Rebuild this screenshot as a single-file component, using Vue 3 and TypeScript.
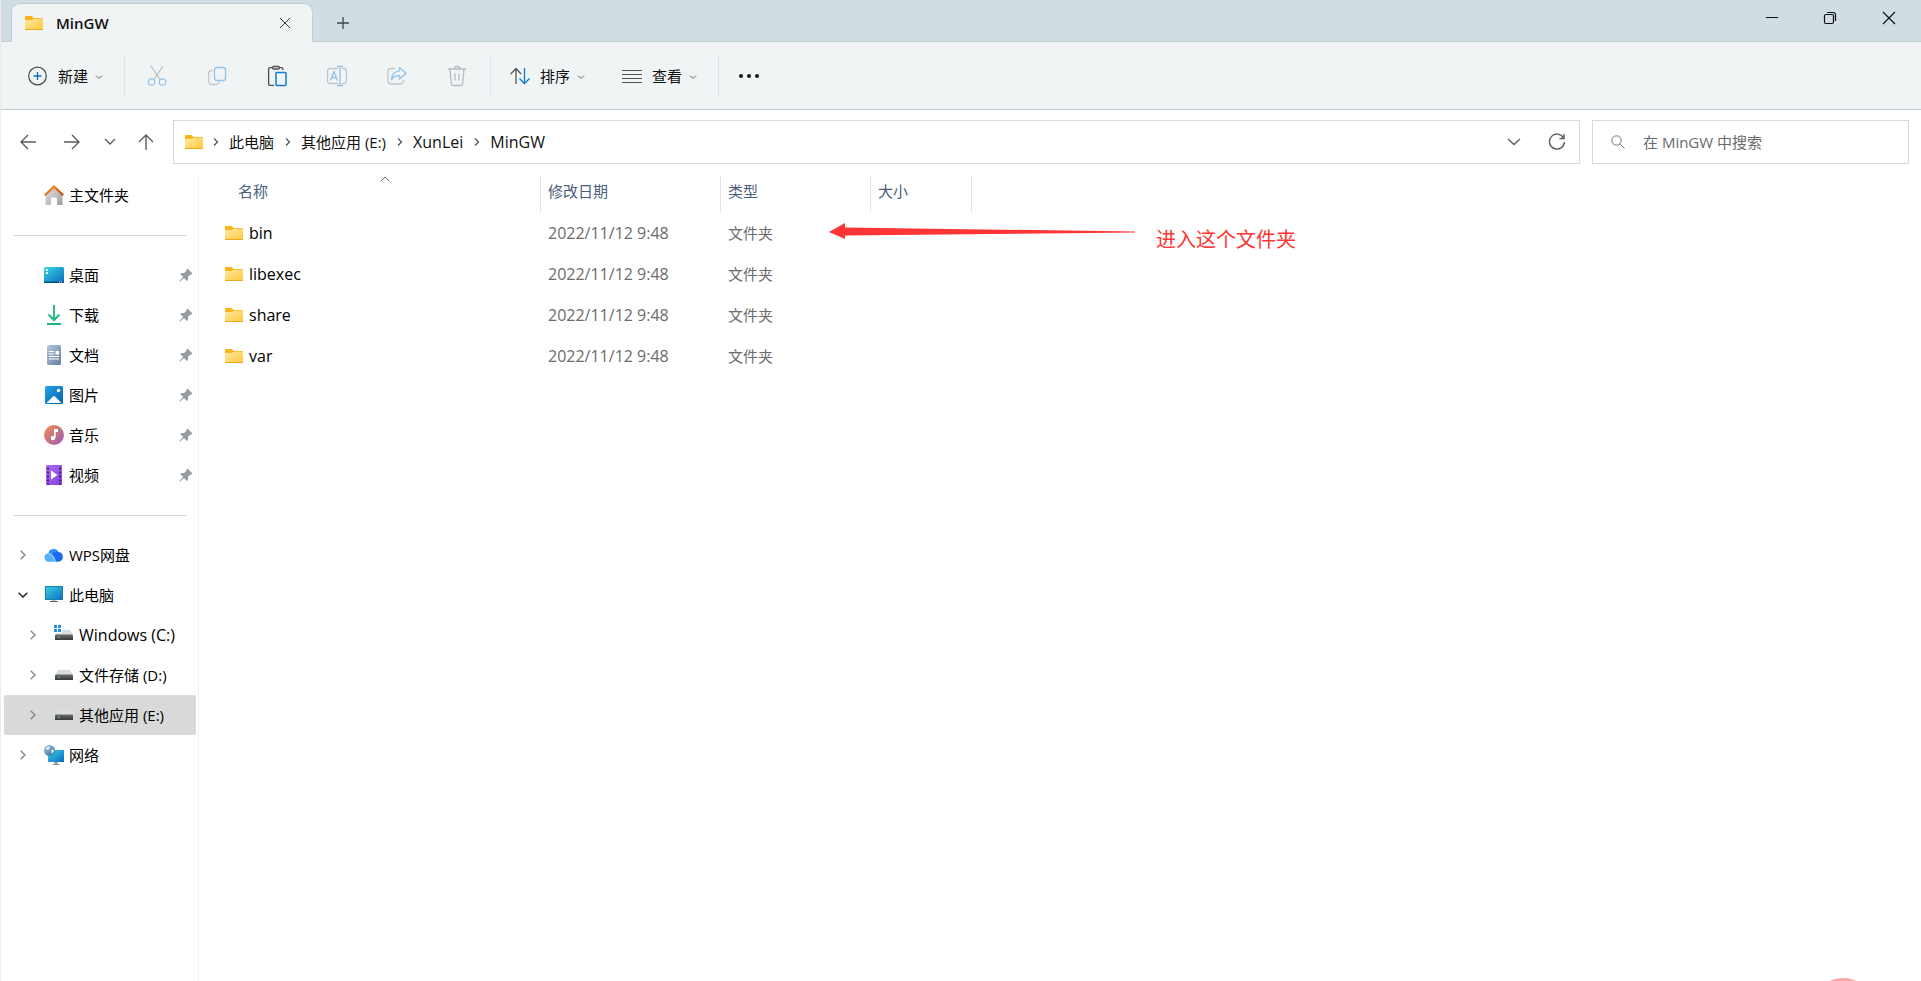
<script setup lang="ts">
import { ref } from 'vue'

interface Place {
  name: string
  icon: string
  pinned?: boolean
  expander?: 'open' | 'closed'
  child?: boolean
  selected?: boolean
}

interface Entry {
  name: string
  modified: string
  kind: string
}

const groups: Place[][] = [
  [{ name: '主文件夹', icon: 'home' }],
  [
    { name: '桌面', icon: 'desktop', pinned: true },
    { name: '下载', icon: 'download', pinned: true },
    { name: '文档', icon: 'document', pinned: true },
    { name: '图片', icon: 'picture', pinned: true },
    { name: '音乐', icon: 'music', pinned: true },
    { name: '视频', icon: 'video', pinned: true },
  ],
  [
    { name: 'WPS网盘', icon: 'cloud', expander: 'closed' },
    { name: '此电脑', icon: 'pc', expander: 'open' },
    { name: 'Windows (C:)', icon: 'system-drive', expander: 'closed', child: true },
    { name: '文件存储 (D:)', icon: 'drive', expander: 'closed', child: true },
    { name: '其他应用 (E:)', icon: 'drive', expander: 'closed', child: true, selected: true },
    { name: '网络', icon: 'network', expander: 'closed' },
  ],
]

const crumbs: string[] = ['此电脑', '其他应用 (E:)', 'XunLei', 'MinGW']

const entries: Entry[] = ['bin', 'libexec', 'share', 'var'].map((name) => ({
  name,
  modified: '2022/11/12 9:48',
  kind: '文件夹',
}))

const query = ref('')

// Latin letters look smaller than ideographs, so purely Latin labels are set a size up.
const isLatin = (text: string): boolean => /^[\x20-\x7e]+$/.test(text)
</script>

<template>
  <div class="window">
    <svg class="defs" width="0" height="0" aria-hidden="true">
      <defs>
        <linearGradient id="g-folder" x1="0" y1="0" x2="1" y2="1">
          <stop offset="0" stop-color="#ffe9a3" />
          <stop offset="1" stop-color="#ffc83a" />
        </linearGradient>
        <linearGradient id="g-blue" x1="0" y1="0" x2="1" y2="1">
          <stop offset="0" stop-color="#37d7e6" />
          <stop offset="1" stop-color="#0b68bd" />
        </linearGradient>
        <linearGradient id="g-wall" x1="0" y1="0" x2="1" y2="1">
          <stop offset="0" stop-color="#e4e4e4" />
          <stop offset="1" stop-color="#9f9f9f" />
        </linearGradient>
        <linearGradient id="g-roof" x1="0" y1="0" x2="1" y2="1">
          <stop offset="0" stop-color="#f6a01c" />
          <stop offset="1" stop-color="#cf3f12" />
        </linearGradient>
        <linearGradient id="g-doc" x1="0" y1="0" x2="1" y2="1">
          <stop offset="0" stop-color="#b3c6dc" />
          <stop offset="1" stop-color="#657f9f" />
        </linearGradient>
        <linearGradient id="g-pic" x1="0" y1="0" x2="1" y2="1">
          <stop offset="0" stop-color="#25a3e8" />
          <stop offset="1" stop-color="#0560ae" />
        </linearGradient>
        <linearGradient id="g-music" x1="0" y1="0" x2="1" y2="1">
          <stop offset="0" stop-color="#f39150" />
          <stop offset="1" stop-color="#9b56b5" />
        </linearGradient>
        <linearGradient id="g-video" x1="0" y1="0" x2="1" y2="1">
          <stop offset="0" stop-color="#b06cf0" />
          <stop offset="1" stop-color="#8340dc" />
        </linearGradient>
        <linearGradient id="g-down" x1="0" y1="0" x2="0" y2="1">
          <stop offset="0" stop-color="#33c481" />
          <stop offset="1" stop-color="#0fa896" />
        </linearGradient>
        <linearGradient id="g-drive" x1="0" y1="0" x2="0" y2="1">
          <stop offset="0" stop-color="#6b6b6b" />
          <stop offset="1" stop-color="#3a3a3a" />
        </linearGradient>
        <linearGradient id="g-globe" x1="0" y1="0" x2="1" y2="1">
          <stop offset="0" stop-color="#a8c8dc" />
          <stop offset="1" stop-color="#2a6a98" />
        </linearGradient>
        <symbol id="i-folder" viewBox="0 0 20 16">
          <path d="M1 2q0-1 1-1h5q1 0 1.500.8L9.500 3H18q1 0 1 1v4H1z" fill="#f9b417" />
          <path d="M1 5h6.500l2-1.200H19V15H1z" fill="url(#g-folder)" />
          <path d="M1 14.500h18" stroke="#eba91c" />
        </symbol>
      </defs>
    </svg>

    <header class="titlebar">
      <div class="tab">
        <svg class="folder" width="20" height="16"><use href="#i-folder" /></svg>
        <span class="tab-name">MinGW</span>
        <button class="icon-button tab-close" aria-label="关闭标签页">
          <svg width="12" height="12" viewBox="0 0 12 12"><path d="M1 1l10 10M11 1L1 11" stroke="#333" fill="none" /></svg>
        </button>
      </div>
      <button class="icon-button new-tab" aria-label="新标签页">
        <svg width="14" height="14" viewBox="0 0 14 14"><path d="M7 1v12M1 7h12" stroke="#444" stroke-width="1.300" fill="none" /></svg>
      </button>
      <div class="caption">
        <button class="icon-button" aria-label="最小化">
          <svg width="14" height="14" viewBox="0 0 14 14"><path d="M1 6.500h12" stroke="#111" /></svg>
        </button>
        <button class="icon-button" aria-label="还原">
          <svg width="14" height="14" viewBox="0 0 14 14" fill="none" stroke="#111" stroke-width="1.200">
            <rect x="1.500" y="3.500" width="9" height="9" rx="1.500" />
            <path d="M4 1.500h6q2.500 0 2.500 2.500v6" />
          </svg>
        </button>
        <button class="icon-button" aria-label="关闭">
          <svg width="14" height="14" viewBox="0 0 14 14"><path d="M1 1l12 12M13 1L1 13" stroke="#111" stroke-width="1.200" fill="none" /></svg>
        </button>
      </div>
    </header>

    <div class="toolbar" role="toolbar">
      <button class="command new">
        <svg width="20" height="20" viewBox="0 0 20 20" fill="none">
          <circle cx="9.500" cy="10" r="8.800" stroke="#4a4a4a" stroke-width="1.200" />
          <path d="M9.500 6v8M5.500 10h8" stroke="#0f6cbd" stroke-width="1.300" />
        </svg>
        <span>新建</span>
        <svg class="drop" width="8" height="6" viewBox="0 0 8 6"><path d="M1 1.500l3 3 3-3" stroke="#666" fill="none" /></svg>
      </button>
      <span class="divider"></span>
      <div class="tools">
        <button class="tool" aria-label="剪切" disabled>
          <svg width="20" height="22" viewBox="0 0 20 22" fill="none" stroke-width="1.200">
            <path d="M4 1l9 13.500M16 1L7 14.500" stroke="#b9bcbe" />
            <circle cx="4.500" cy="17" r="3.200" stroke="#93c3ea" />
            <circle cx="15.500" cy="17" r="3.200" stroke="#93c3ea" />
          </svg>
        </button>
        <button class="tool" aria-label="复制" disabled>
          <svg width="20" height="22" viewBox="0 0 20 22" fill="none" stroke-width="1.300">
            <path d="M5.500 5.500h-1q-2.900 0-2.900 3v7q0 4 4 4h3q3 0 3.400-2.500" stroke="#c3c6c8" />
            <rect x="7.500" y="2.500" width="11" height="13" rx="2.500" stroke="#93c3ea" />
          </svg>
        </button>
        <button class="tool" aria-label="粘贴">
          <svg width="20" height="22" viewBox="0 0 20 22" fill="none" stroke-width="1.300">
            <path d="M7 20.400H3q-1.400 0-1.400-1.400V4q0-1.400 1.400-1.400h2M13 2.600h1.500q1.400 0 1.400 1.400v1" stroke="#4d4d4d" />
            <rect x="5.500" y="1.500" width="7" height="2.500" rx="1.200" stroke="#4d4d4d" />
            <rect x="9" y="7.500" width="10" height="13" rx="1" fill="#eef6fc" stroke="#0f7bd4" stroke-width="1.500" />
          </svg>
        </button>
        <button class="tool" aria-label="重命名" disabled>
          <svg width="22" height="22" viewBox="0 0 22 22" fill="none" stroke-width="1.300">
            <path d="M12 3.500H4q-2.500 0-2.500 2.500v10q0 2.500 2.500 2.500h8M16 3.500h2q2.500 0 2.500 2.500v10q0 2.500-2.500 2.500h-2" stroke="#c3c6c8" />
            <path d="M14 1.500v19M11 1.500h6M11 20.500h6M4.500 15.500L8 6.500l3.500 9M6 12.500h4" stroke="#93c3ea" />
          </svg>
        </button>
        <button class="tool" aria-label="共享" disabled>
          <svg width="22" height="22" viewBox="0 0 22 22" fill="none" stroke-width="1.300" stroke-linejoin="round">
            <path d="M9 3.500H5q-3 0-3 3v9.500q0 3 3 3h9q3 0 3.500-3v-1" stroke="#c3c6c8" />
            <path d="M13.500 2.500l6.500 5.700L13.500 14v-3.300Q8.500 10.400 5.500 14.700 6 6.500 13.500 5.800z" stroke="#93c3ea" />
          </svg>
        </button>
        <button class="tool" aria-label="删除" disabled>
          <svg width="20" height="22" viewBox="0 0 20 22" fill="none" stroke="#b9bcbe" stroke-width="1.300">
            <path d="M1 4h18M7 4q0-2.500 3-2.500T13 4M3 4l1.300 14.500q.2 2 2.200 2h7q2 0 2.200-2L17 4M8 8.500v7M12 8.500v7" />
          </svg>
        </button>
      </div>
      <span class="divider"></span>
      <button class="command sort">
        <svg width="20" height="18" viewBox="0 0 20 18" fill="none" stroke-width="1.300">
          <path d="M6 17V1.500M.7 7L6 1.500 11 7" stroke="#555" />
          <path d="M14.500 1v15.500M9.500 11.500l5 5 5-5" stroke="#0f7bd4" />
        </svg>
        <span>排序</span>
        <svg class="drop" width="8" height="6" viewBox="0 0 8 6"><path d="M1 1.500l3 3 3-3" stroke="#666" fill="none" /></svg>
      </button>
      <button class="command view">
        <svg width="20" height="14" viewBox="0 0 20 14"><path d="M0 1.500h20M0 5.500h20M0 9.500h20M0 13.500h20" stroke="#555" /></svg>
        <span>查看</span>
        <svg class="drop" width="8" height="6" viewBox="0 0 8 6"><path d="M1 1.500l3 3 3-3" stroke="#666" fill="none" /></svg>
      </button>
      <span class="divider"></span>
      <button class="tool more" aria-label="更多">
        <svg width="22" height="6" viewBox="0 0 22 6" fill="#1a1a1a">
          <circle cx="3" cy="3" r="2" /><circle cx="11" cy="3" r="2" /><circle cx="19" cy="3" r="2" />
        </svg>
      </button>
    </div>

    <nav class="navbar" aria-label="地址">
      <div class="history">
        <button class="icon-button" aria-label="后退">
          <svg width="16" height="16" viewBox="0 0 16 16"><path d="M8 1L1 8l7 7M1 8h15" /></svg>
        </button>
        <button class="icon-button" aria-label="前进">
          <svg width="16" height="16" viewBox="0 0 16 16"><path d="M8 1l7 7-7 7M15 8H0" /></svg>
        </button>
        <button class="icon-button recent" aria-label="最近位置">
          <svg width="12" height="8" viewBox="0 0 12 8"><path d="M1 1l5 5 5-5" /></svg>
        </button>
        <button class="icon-button up" aria-label="向上">
          <svg width="16" height="16" viewBox="0 0 16 16"><path d="M1 8l7-7 7 7M8 1v15" /></svg>
        </button>
      </div>
      <div class="address">
        <svg class="folder" width="20" height="16"><use href="#i-folder" /></svg>
        <ol class="crumbs">
          <li v-for="crumb in crumbs" :key="crumb">
            <svg width="6" height="8" viewBox="0 0 6 8"><path d="M1 .5L4.500 4 1 7.500" stroke="#555" stroke-width="1.300" fill="none" /></svg>
            <a href="#" :class="{ latin: isLatin(crumb) }">{{ crumb }}</a>
          </li>
        </ol>
        <button class="icon-button" aria-label="历史记录">
          <svg width="14" height="8" viewBox="0 0 14 8"><path d="M1 1l6 5.500L13 1" /></svg>
        </button>
        <button class="icon-button" aria-label="刷新">
          <svg width="18" height="18" viewBox="0 0 18 18"><path d="M15.500 4.800A7.500 7.500 0 1 0 16.500 9M16 1v4.500h-4.500" /></svg>
        </button>
      </div>
      <label class="search">
        <svg width="14" height="14" viewBox="0 0 14 14" fill="none" stroke="#777"><circle cx="5.500" cy="5.500" r="4.700" /><path d="M9 9l4.500 4.500" /></svg>
        <input v-model="query" type="search" placeholder="在 MinGW 中搜索" aria-label="搜索" />
      </label>
    </nav>

    <div class="body">
      <aside class="sidebar">
        <ul v-for="(group, index) in groups" :key="index" class="group">
          <li v-for="place in group" :key="place.name">
            <a href="#" class="place" :class="{ child: place.child, selected: place.selected }">
              <span class="expander">
                <svg v-if="place.expander === 'closed'" width="6" height="10" viewBox="0 0 6 10"><path d="M.7.700L5 5 .7 9.300" stroke="#868686" stroke-width="1.400" fill="none" /></svg>
                <svg v-else-if="place.expander === 'open'" width="10" height="6" viewBox="0 0 10 6"><path d="M.7.700L5 5 9.300.7" stroke="#222" stroke-width="1.500" fill="none" /></svg>
              </span>
              <svg class="place-icon" width="20" height="20" viewBox="0 0 20 20">
                <g v-if="place.icon === 'home'">
                  <path d="M1.500 9L10 1.500 18.500 9v11H13v-7.500H7V20H1.500z" fill="url(#g-wall)" />
                  <path d="M.8 10.200L10 1.600l9.200 8.600" fill="none" stroke="url(#g-roof)" stroke-width="2.200" />
                </g>
                <g v-else-if="place.icon === 'desktop'">
                  <rect y="2" width="20" height="16" rx="1.500" fill="url(#g-blue)" />
                  <path d="M0 16.500h20v.500q0 1-1 1H1q-1 0-1-1z" fill="#07517f" />
                  <path d="M2 4h2v2H2zM2 7h2v2H2z" fill="#fff" />
                  <path d="M15 16.500h1v1h-1zM17 16.500h1v1h-1z" fill="#fff" />
                </g>
                <g v-else-if="place.icon === 'download'" fill="none" stroke="url(#g-down)" stroke-width="2">
                  <path d="M3 19h14" stroke="#1fb58b" />
                  <path d="M4.500 9.500L10 15l5.500-5.500" />
                  <path d="M10 0v15" stroke="#2bbd84" />
                </g>
                <g v-else-if="place.icon === 'document'">
                  <rect x="3" width="14" height="20" rx="1.500" fill="url(#g-doc)" />
                  <path d="M5 6.500h5M5 9h5M5 11.500h10M5 14h10" stroke="#fff" stroke-width="1.200" />
                  <path d="M11.500 6H15v3.500h-3.500z" fill="#fff" />
                </g>
                <g v-else-if="place.icon === 'picture'">
                  <rect x="1" y="1" width="18" height="18" rx="1.500" fill="url(#g-pic)" />
                  <path d="M2.500 18L9 11.500q1-1 2 0l6.500 6.500z" fill="#f4faff" />
                  <circle cx="14.500" cy="5.500" r="1.700" fill="#fff" />
                </g>
                <g v-else-if="place.icon === 'music'">
                  <circle cx="10" cy="10" r="10" fill="url(#g-music)" />
                  <circle cx="9" cy="13" r="2.300" fill="#fff" />
                  <path d="M10 13V4h4v3h-2.300v6z" fill="#fff" />
                </g>
                <g v-else-if="place.icon === 'video'">
                  <rect x="2" width="16" height="20" rx="1" fill="url(#g-video)" />
                  <path d="M4 2.500V20M16 2.500V20" stroke="#4a1d8c" stroke-width="2" stroke-dasharray="2 2" />
                  <path d="M7 5.500l6.500 4.500L7 14.500z" fill="#fff" />
                </g>
                <g v-else-if="place.icon === 'cloud'">
                  <path d="M5 16.500a4 4 0 0 1-.7-8A5.500 5.500 0 0 1 14.800 7.300 4.700 4.700 0 0 1 15 16.500z" fill="#2f8ff5" />
                  <path d="M5 16.500a4 4 0 0 1 0-8q4 .2 6.500 8z" fill="#57b2fb" />
                  <path d="M8 9q3-3.500 7-1.700a4.700 4.700 0 0 1 0 9.200h-3.500Q11 12 8 9z" fill="#1b6cf0" />
                  <path d="M4.500 8.500q5 .5 7 8" stroke="#d4eaff" fill="none" stroke-width=".8" />
                </g>
                <g v-else-if="place.icon === 'pc'">
                  <rect x="1" y="1" width="18" height="14" fill="url(#g-blue)" />
                  <path d="M1.500 1.500h17v13h-17z" fill="none" stroke="#1c7da8" />
                  <path d="M8.500 15h3v1.500h-3z" fill="#aab2b8" />
                  <path d="M6 16h8v1H6z" fill="#5c666e" />
                </g>
                <g v-else-if="place.icon === 'drive' || place.icon === 'system-drive'">
                  <path d="M4 5h12l3 5H1z" fill="#dcdde1" />
                  <path d="M1 10.500q0-1 1-1h16q1 0 1 1V15H1z" fill="url(#g-drive)" />
                  <path d="M4 11.500h1.500V13H4z" fill="#4be04b" />
                  <g v-if="place.icon === 'system-drive'">
                    <path d="M0 0h8v8H0z" fill="#fff" />
                    <path d="M0 0h3v3H0zM4 0h3v3H4zM0 4h3v3H0zM4 4h3v3H4z" fill="#1b8fe3" />
                  </g>
                </g>
                <g v-else>
                  <rect x="4" y="5" width="16" height="12" fill="url(#g-blue)" />
                  <path d="M10.500 17h3v2h-3zM8.500 19h7v1h-7z" fill="#8b959c" />
                  <circle cx="5.500" cy="5.500" r="5.500" fill="url(#g-globe)" />
                  <path d="M2 3q2-2 4-1.500L5 4.500 3 5zM7 5l3-.5q0 3-2 4.500z" fill="#e4f1f7" />
                </g>
              </svg>
              <span class="place-name" :class="{ latin: isLatin(place.name) }">{{ place.name }}</span>
              <svg v-if="place.pinned" class="pin" width="14" height="14" viewBox="0 0 14 14">
                <path d="M8.500.5l5 5-1.300 1.300-.9-.2-2.400 2.400.2 2.800-1.100 1.100L5 9.900 1.200 13.500l-.7.1.1-.8L4.200 9 1.200 6l1.100-1.100 2.900.2 2.300-2.300-.2-1z" fill="#939ba3" />
              </svg>
            </a>
          </li>
        </ul>
      </aside>

      <main class="content">
        <table class="files">
          <colgroup>
            <col class="col-name" /><col class="col-date" /><col class="col-kind" /><col class="col-size" />
          </colgroup>
          <thead>
            <tr>
              <th scope="col" aria-sort="ascending">
                名称
                <svg class="sorted" width="10" height="6" viewBox="0 0 10 6"><path d="M.7 5.300L5 1l4.300 4.300" stroke="#666" fill="none" /></svg>
              </th>
              <th scope="col">修改日期</th>
              <th scope="col">类型</th>
              <th scope="col">大小</th>
            </tr>
          </thead>
          <tbody>
            <tr v-for="entry in entries" :key="entry.name">
              <td class="name">
                <a href="#" class="latin"><svg class="folder" width="20" height="16"><use href="#i-folder" /></svg>{{ entry.name }}</a>
              </td>
              <td class="latin">{{ entry.modified }}</td>
              <td>{{ entry.kind }}</td>
              <td></td>
            </tr>
          </tbody>
        </table>
        <div class="note">
          <svg width="308" height="18" viewBox="0 0 308 18"><path d="M0 9L16 0v4.500L306 8.500v1L16 12.500V16z" fill="#fd3535" /></svg>
          <span>进入这个文件夹</span>
        </div>
      </main>
    </div>
    <span class="bubble"></span>
  </div>
</template>

<style>
html,
body {
  height: 100%;
}
body {
  margin: 0;
  background: #fff;
}
</style>

<style scoped>
.window {
  position: relative;
  box-sizing: border-box;
  display: flex;
  flex-direction: column;
  min-height: 100vh;
  overflow: hidden;
  border-left: 1px solid #ececec;
  background: #fff;
  color: #111;
  font-family: "Open Sans", "Noto Sans CJK SC", sans-serif;
  font-size: 15px;
  line-height: 20px;
}
.latin {
  font-size: 16px;
}
.defs {
  position: absolute;
}
svg {
  display: block;
  flex: none;
}
button {
  padding: 0;
  border: 0;
  background: none;
  color: inherit;
  font: inherit;
}
a {
  color: inherit;
  text-decoration: none;
}
ul,
ol {
  margin: 0;
  padding: 0;
  list-style: none;
}
.icon-button {
  display: flex;
  align-items: center;
  justify-content: center;
}

.titlebar {
  display: flex;
  height: 41px;
  border-bottom: 1px solid #c3d0d3;
  background: #d0dde2;
}
.tab {
  box-sizing: border-box;
  display: flex;
  align-items: center;
  width: 302px;
  height: 39px;
  margin: 3px 0 0 10px;
  padding: 0 13px 1px 12px;
  border: 1px solid #c3d0d3;
  border-bottom: 0;
  border-radius: 9px 9px 0 0;
  background: #f0f4f5;
}
.tab-name {
  flex: 1;
  margin-left: 12px;
  font-weight: 600;
}
.tab-close {
  width: 28px;
  height: 28px;
}
.new-tab {
  width: 40px;
  height: 40px;
  margin: 3px 0 0 10px;
}
.caption {
  display: flex;
  height: 36px;
  margin-left: auto;
  padding-right: 2px;
}
.caption .icon-button {
  width: 58px;
}
.caption .icon-button:last-child {
  width: 60px;
}

.toolbar {
  display: flex;
  align-items: center;
  height: 67px;
  border-bottom: 1px solid #c0cdd0;
  background: #f0f4f5;
}
.command {
  display: flex;
  align-items: center;
  height: 40px;
  gap: 10px;
}
.command .drop {
  margin: 2px 0 0 -3px;
}
.new {
  margin: 0 21px 0 27px;
}
.sort {
  margin: 0 37px 0 19px;
}
.view {
  margin-right: 21px;
}
.divider {
  width: 1px;
  height: 40px;
  background: #dfe3e5;
}
.tools {
  display: flex;
  padding: 0 3px 0 2px;
}
.tool {
  display: flex;
  align-items: center;
  justify-content: center;
  width: 60px;
  height: 40px;
}

.navbar {
  display: flex;
  align-items: center;
  padding: 10px 12px 11px 5px;
}
.history {
  display: flex;
  align-items: center;
  width: 167px;
}
.history .icon-button {
  width: 44px;
  height: 40px;
}
.history .recent {
  width: 32px;
}
.history .up {
  width: 40px;
}
.navbar button svg {
  fill: none;
  stroke: #5c5c5c;
  stroke-width: 1.4;
}
.address,
.search {
  box-sizing: border-box;
  display: flex;
  align-items: center;
  height: 44px;
  border: 1px solid #d9d9d9;
}
.address {
  flex: 1;
  padding: 0 1px 1px 10px;
}
.address .icon-button {
  width: 43px;
  height: 40px;
}
.crumbs {
  display: flex;
  flex: 1;
  margin-left: 9px;
}
.crumbs li {
  display: flex;
  align-items: center;
  gap: 10px;
  margin-right: 11px;
}
.search {
  width: 317px;
  margin-left: 12px;
  padding: 0 18px;
  gap: 18px;
}
.search input {
  flex: 1;
  min-width: 0;
  padding: 0;
  border: 0;
  outline: 0;
  background: none;
  color: #111;
  font: inherit;
}
.search input::placeholder {
  color: #6a6a6a;
  opacity: 1;
}

.body {
  display: flex;
  flex: 1;
}
.sidebar {
  box-sizing: border-box;
  width: 198px;
  border-right: 1px solid #f0f0f0;
}
.group + .group::before {
  content: "";
  display: block;
  height: 1px;
  margin: 20px 12px 19px 13px;
  background: #d4d4d4;
}
.place {
  display: flex;
  align-items: center;
  height: 40px;
  margin: 0 2px 0 3px;
  padding-right: 3px;
  border-radius: 2px;
  color: #000;
}
.place.child {
  padding-left: 10px;
}
.place.selected {
  background: #d9d9d9;
}
.expander {
  display: flex;
  justify-content: center;
  width: 38px;
}
.place-icon {
  margin: 0 5px 0 2px;
}
.place-name {
  flex: 1;
  white-space: nowrap;
}

.content {
  position: relative;
  flex: 1;
}
.files {
  width: 773px;
  margin-top: 1px;
  border-spacing: 0;
  table-layout: fixed;
}
.col-name {
  width: 342px;
}
.col-date {
  width: 180px;
}
.col-kind {
  width: 150px;
}
.col-size {
  width: 101px;
}
th {
  position: relative;
  box-sizing: border-box;
  height: 36px;
  padding: 0 7px 7px;
  border-right: 1px solid #e3e3e3;
  color: #4a5d7a;
  font-weight: 400;
  text-align: left;
}
th:first-child {
  padding-left: 39px;
}
.sorted {
  position: absolute;
  top: 0;
  right: 150px;
}
td {
  box-sizing: border-box;
  height: 41px;
  padding: 1px 7px 0;
  color: #6b6b6b;
}
.name a {
  display: flex;
  align-items: center;
  gap: 5px;
  padding-left: 18px;
  color: #000;
}
.note {
  position: absolute;
  top: 48px;
  left: 630px;
  display: flex;
  gap: 19px;
  color: #fd3535;
  font-size: 20px;
  line-height: 34px;
}
.bubble {
  position: absolute;
  right: 48px;
  bottom: -57px;
  width: 60px;
  height: 60px;
  border-radius: 50%;
  background: #ffa3a3;
}
</style>
